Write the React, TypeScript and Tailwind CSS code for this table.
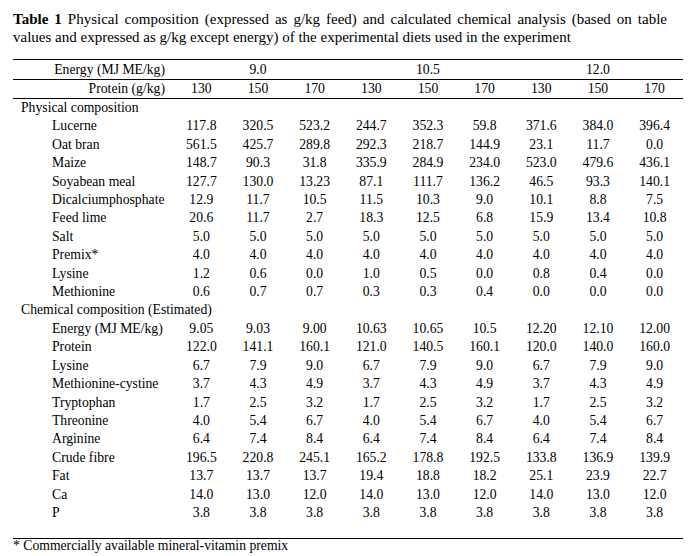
import React from "react";

type Row = { label: string; values?: string[]; section?: boolean };

const rows: Row[] = [
  { label: "Physical composition", section: true },
  { label: "Lucerne", values: ["117.8", "320.5", "523.2", "244.7", "352.3", "59.8", "371.6", "384.0", "396.4"] },
  { label: "Oat bran", values: ["561.5", "425.7", "289.8", "292.3", "218.7", "144.9", "23.1", "11.7", "0.0"] },
  { label: "Maize", values: ["148.7", "90.3", "31.8", "335.9", "284.9", "234.0", "523.0", "479.6", "436.1"] },
  { label: "Soyabean meal", values: ["127.7", "130.0", "13.23", "87.1", "111.7", "136.2", "46.5", "93.3", "140.1"] },
  { label: "Dicalciumphosphate", values: ["12.9", "11.7", "10.5", "11.5", "10.3", "9.0", "10.1", "8.8", "7.5"] },
  { label: "Feed lime", values: ["20.6", "11.7", "2.7", "18.3", "12.5", "6.8", "15.9", "13.4", "10.8"] },
  { label: "Salt", values: ["5.0", "5.0", "5.0", "5.0", "5.0", "5.0", "5.0", "5.0", "5.0"] },
  { label: "Premix*", values: ["4.0", "4.0", "4.0", "4.0", "4.0", "4.0", "4.0", "4.0", "4.0"] },
  { label: "Lysine", values: ["1.2", "0.6", "0.0", "1.0", "0.5", "0.0", "0.8", "0.4", "0.0"] },
  { label: "Methionine", values: ["0.6", "0.7", "0.7", "0.3", "0.3", "0.4", "0.0", "0.0", "0.0"] },
  { label: "Chemical composition (Estimated)", section: true },
  { label: "Energy (MJ ME/kg)", values: ["9.05", "9.03", "9.00", "10.63", "10.65", "10.5", "12.20", "12.10", "12.00"] },
  { label: "Protein", values: ["122.0", "141.1", "160.1", "121.0", "140.5", "160.1", "120.0", "140.0", "160.0"] },
  { label: "Lysine", values: ["6.7", "7.9", "9.0", "6.7", "7.9", "9.0", "6.7", "7.9", "9.0"] },
  { label: "Methionine-cystine", values: ["3.7", "4.3", "4.9", "3.7", "4.3", "4.9", "3.7", "4.3", "4.9"] },
  { label: "Tryptophan", values: ["1.7", "2.5", "3.2", "1.7", "2.5", "3.2", "1.7", "2.5", "3.2"] },
  { label: "Threonine", values: ["4.0", "5.4", "6.7", "4.0", "5.4", "6.7", "4.0", "5.4", "6.7"] },
  { label: "Arginine", values: ["6.4", "7.4", "8.4", "6.4", "7.4", "8.4", "6.4", "7.4", "8.4"] },
  { label: "Crude fibre", values: ["196.5", "220.8", "245.1", "165.2", "178.8", "192.5", "133.8", "136.9", "139.9"] },
  { label: "Fat", values: ["13.7", "13.7", "13.7", "19.4", "18.8", "18.2", "25.1", "23.9", "22.7"] },
  { label: "Ca", values: ["14.0", "13.0", "12.0", "14.0", "13.0", "12.0", "14.0", "13.0", "12.0"] },
  { label: "P", values: ["3.8", "3.8", "3.8", "3.8", "3.8", "3.8", "3.8", "3.8", "3.8"] },
];

const proteins = ["130", "150", "170", "130", "150", "170", "130", "150", "170"];

export default function App() {
  return (
    <div className="w-[690px] h-[556px] bg-white text-black font-['Liberation_Serif','Times_New_Roman',serif] pl-[13px] pt-[10px]">
      <div className="w-[654px] text-[15px] leading-[18px]">
        <div className="text-justify [text-align-last:justify]">
          <span className="font-bold">Table 1</span> Physical composition (expressed as g/kg feed) and calculated chemical analysis (based on table
        </div>
        <div>values and expressed as g/kg except energy) of the experimental diets used in the experiment</div>
      </div>
      <table className="mt-[13px] w-[670px] table-fixed border-collapse text-[13.7px] leading-[18.4px]">
        <colgroup>
          <col className="w-[160px]" />
          {proteins.map((_, i) => (
            <col key={i} className="w-[56.67px]" />
          ))}
        </colgroup>
        <thead>
          <tr className="border-t border-b border-black leading-[19px]">
            <td className="h-[19px] p-0 text-right pr-[8px]">Energy (MJ ME/kg)</td>
            <td colSpan={3} className="p-0 text-center">9.0</td>
            <td colSpan={3} className="p-0 text-center">10.5</td>
            <td colSpan={3} className="p-0 text-center">12.0</td>
          </tr>
          <tr className="border-b border-black leading-[18px]">
            <td className="h-[18px] p-0 text-right pr-[8px]">Protein (g/kg)</td>
            {proteins.map((p, i) => (
              <td key={i} className="p-0 text-center">{p}</td>
            ))}
          </tr>
        </thead>
        <tbody>
          {rows.map((r, idx) =>
            r.section ? (
              <tr key={idx}>
                <td colSpan={10} className="h-[18.4px] p-0 pl-[8px] whitespace-nowrap">
                  {r.label}
                </td>
              </tr>
            ) : (
              <tr key={idx}>
                <td className="h-[18.4px] p-0 pl-[39px] whitespace-nowrap">{r.label}</td>
                {r.values!.map((v, i) => (
                  <td key={i} className="p-0 text-center">{v}</td>
                ))}
              </tr>
            )
          )}
          <tr className="border-b border-black">
            <td colSpan={10} className="h-[16px] p-0" />
          </tr>
        </tbody>
      </table>
      <div className="text-[13.7px] leading-[12px] pt-[1px]">* Commercially available mineral-vitamin premix</div>
    </div>
  );
}
